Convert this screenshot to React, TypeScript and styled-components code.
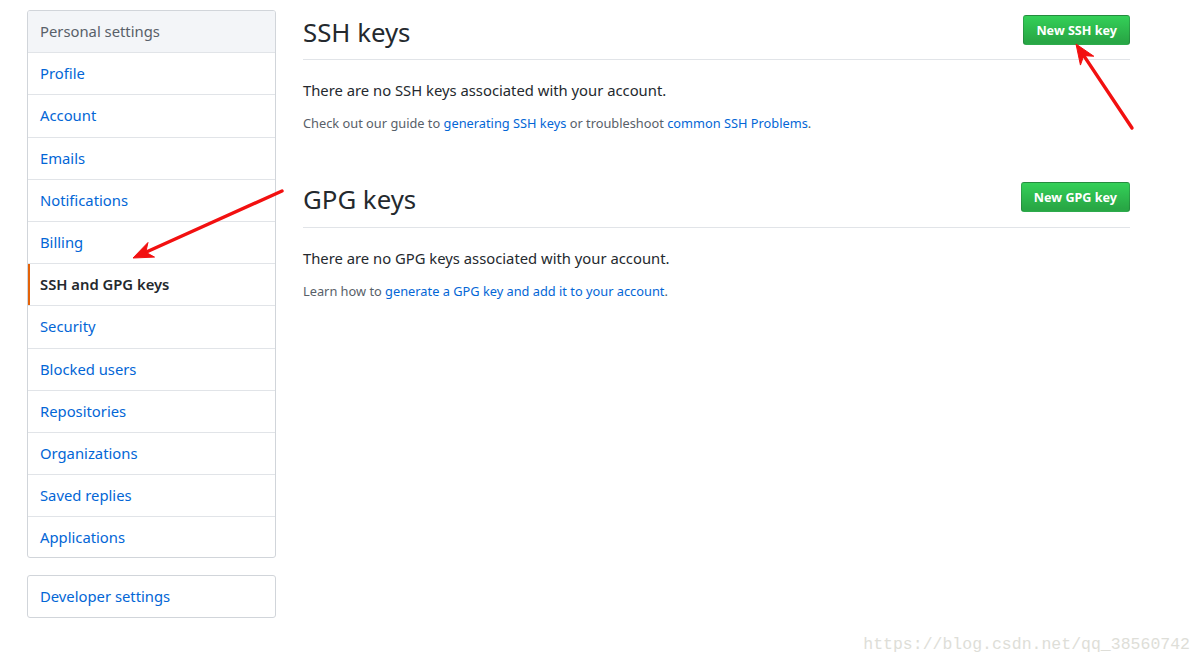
import React, { FC } from "react";
import styled, { createGlobalStyle } from "styled-components";

const GlobalStyle = createGlobalStyle`
  html, body {
    margin: 0;
    padding: 0;
    background: #ffffff;
  }
  body {
    font-family: "Noto Sans", "Liberation Sans", sans-serif;
    font-size: 14.8px;
    color: #24292e;
  }
`;

const Page = styled.div`
  position: relative;
  width: 1201px;
  height: 663px;
  overflow: hidden;
  display: flex;
  align-items: flex-start;
  gap: 27px;
  padding: 10px 0 0 27px;
  box-sizing: border-box;
`;

const SideColumn = styled.div`
  width: 249px;
  flex-shrink: 0;
  display: flex;
  flex-direction: column;
  gap: 17px;
`;

const Menu = styled.nav`
  border: 1px solid #d1d5da;
  border-radius: 3px;
  background: #fff;
  overflow: hidden;
`;

const MenuHeading = styled.div`
  padding: 10px 12px;
  line-height: 21.2px;
  background: #f3f5f8;
  color: #586069;
  border-bottom: 1px solid #e1e4e8;
`;

const MenuItem = styled.a<{ selected?: boolean; tail?: boolean }>`
  display: block;
  position: relative;
  padding: 10px 12px ${({ tail }) => (tail ? 8 : 10)}px;
  line-height: 21.2px;
  color: ${({ selected }) => (selected ? "#24292e" : "#0366d6")};
  font-weight: ${({ selected }) => (selected ? 600 : 400)};
  text-decoration: none;
  border-bottom: 1px solid #e1e4e8;
  cursor: pointer;

  &:last-child {
    border-bottom: none;
  }

  ${({ selected }) =>
    selected &&
    `
    &::before {
      content: "";
      position: absolute;
      left: 0;
      top: 0;
      bottom: 0;
      width: 2px;
      background: #e36209;
    }
  `}
`;

const Main = styled.main`
  width: 827px;
  padding-top: 4px;
`;

const Section = styled.section`
  & + & {
    margin-top: 48px;
  }
`;

const Subhead = styled.div<{ pad: number }>`
  display: flex;
  justify-content: space-between;
  align-items: flex-start;
  padding-bottom: ${({ pad }) => pad}px;
  border-bottom: 1px solid #e1e4e8;
`;

const Heading = styled.h2`
  margin: 0;
  font-size: 25.8px;
  font-weight: 400;
  line-height: 36px;
  color: #24292e;
`;

const GreenButton = styled.button`
  margin-top: 1px;
  height: 30px;
  padding: 0 12px;
  font-family: inherit;
  font-size: 12.6px;
  font-weight: 700;
  color: #fff;
  background: linear-gradient(-180deg, #34d058 0%, #28a745 90%);
  border: 1px solid rgba(27, 31, 35, 0.2);
  border-radius: 3px;
  cursor: pointer;
`;

const Blank = styled.p`
  margin: 20px 0 0;
  line-height: 21px;
  font-size: 14.8px;
`;

const Note = styled.p`
  margin: 12px 0 0;
  font-size: 12.8px;
  line-height: 20px;
  color: #586069;

  a {
    color: #0366d6;
    text-decoration: none;
  }
`;

const Overlay = styled.svg`
  position: absolute;
  left: 0;
  top: 0;
  pointer-events: none;
`;

const Watermark = styled.div`
  position: absolute;
  right: 11px;
  bottom: 9px;
  font-family: "Liberation Mono", "DejaVu Sans Mono", monospace;
  font-size: 16.5px;
  color: #deded8;
`;

const items = [
  "Profile",
  "Account",
  "Emails",
  "Notifications",
  "Billing",
  "SSH and GPG keys",
  "Security",
  "Blocked users",
  "Repositories",
  "Organizations",
  "Saved replies",
  "Applications",
];

type ArrowProps = { x1: number; y1: number; x2: number; y2: number };

const Arrow: FC<ArrowProps> = ({ x1, y1, x2, y2 }) => {
  const ang = Math.atan2(y2 - y1, x2 - x1);
  const len = 20;
  const wid = 8;
  const bx = x2 - Math.cos(ang) * len;
  const by = y2 - Math.sin(ang) * len;
  const px = -Math.sin(ang) * wid;
  const py = Math.cos(ang) * wid;
  const nx = x2 - Math.cos(ang) * (len - 6);
  const ny = y2 - Math.sin(ang) * (len - 6);
  return (
    <g fill="#f21010" stroke="#f21010">
      <line x1={x1} y1={y1} x2={nx} y2={ny} strokeWidth={3.4} strokeLinecap="round" />
      <polygon
        points={`${x2},${y2} ${bx + px},${by + py} ${nx},${ny} ${bx - px},${by - py}`}
        strokeWidth={1}
        strokeLinejoin="round"
      />
    </g>
  );
};

const App: FC = () => {
  return (
    <Page>
      <GlobalStyle />
      <SideColumn>
        <Menu>
          <MenuHeading>Personal settings</MenuHeading>
          {items.map((item, i) => (
            <MenuItem
              key={item}
              selected={item === "SSH and GPG keys"}
              tail={i === items.length - 1}
            >
              {item}
            </MenuItem>
          ))}
        </Menu>
        <Menu>
          <MenuItem>Developer settings</MenuItem>
        </Menu>
      </SideColumn>
      <Main>
        <Section>
          <Subhead pad={9}>
            <Heading>SSH keys</Heading>
            <GreenButton>New SSH key</GreenButton>
          </Subhead>
          <Blank>There are no SSH keys associated with your account.</Blank>
          <Note>
            Check out our guide to <a>generating SSH keys</a> or troubleshoot{" "}
            <a>common SSH Problems</a>.
          </Note>
        </Section>
        <Section>
          <Subhead pad={10}>
            <Heading>GPG keys</Heading>
            <GreenButton>New GPG key</GreenButton>
          </Subhead>
          <Blank>There are no GPG keys associated with your account.</Blank>
          <Note>
            Learn how to <a>generate a GPG key and add it to your account</a>.
          </Note>
        </Section>
      </Main>
      <Overlay width={1201} height={663}>
        <Arrow x1={1132} y1={128} x2={1076} y2={44} />
        <Arrow x1={282} y1={191} x2={133} y2={258} />
      </Overlay>
      <Watermark>https://blog.csdn.net/qq_38560742</Watermark>
    </Page>
  );
};

export default App;
